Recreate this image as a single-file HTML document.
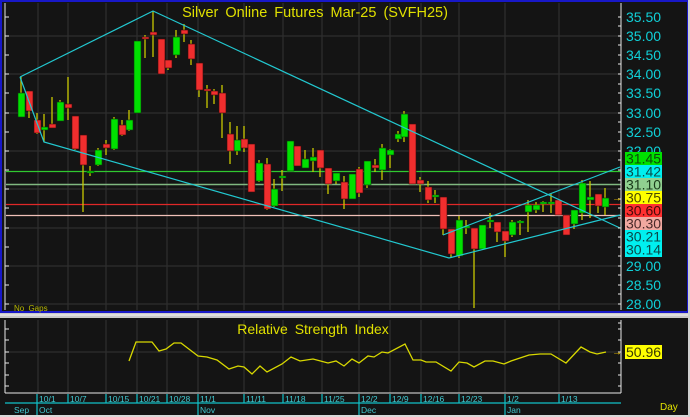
<!DOCTYPE html>
<html><head><meta charset="utf-8"><style>
html,body{margin:0;padding:0;background:#f0f0f0;}
svg{display:block;font-family:"Liberation Sans",sans-serif;}
</style></head><body>
<svg width="690" height="417" viewBox="0 0 690 417" xmlns="http://www.w3.org/2000/svg">
<rect x="0" y="0" width="690" height="417" fill="#141414"/>
<!-- main panel border -->
<rect x="1" y="1" width="687" height="311" fill="none" stroke="#1818c8" stroke-width="2"/>
<!-- separator -->
<rect x="0" y="313" width="690" height="5" fill="#c8c8c8"/>
<line x1="0" y1="315" x2="690" y2="315" stroke="#f4f4f4" stroke-width="1"/>
<rect x="0" y="415" width="690" height="2" fill="#d8d8d8"/>
<rect x="688" y="0" width="2" height="417" fill="#d0d0d0"/>
<!-- grid horizontal -->
<g stroke="#2e2e2e" stroke-width="1.3">
<line x1="6" y1="36" x2="621" y2="36"/><line x1="6" y1="74" x2="621" y2="74"/><line x1="6" y1="113" x2="621" y2="113"/><line x1="6" y1="151" x2="621" y2="151"/><line x1="6" y1="189" x2="621" y2="189"/><line x1="6" y1="228" x2="621" y2="228"/><line x1="6" y1="266" x2="621" y2="266"/><line x1="6" y1="304" x2="621" y2="304"/>
<line x1="6" y1="352" x2="621" y2="352"/>
</g>
<g stroke="#2e2e2e" stroke-width="1.3">
<line x1="38" y1="3" x2="38" y2="310"/><line x1="68" y1="3" x2="68" y2="310"/><line x1="106" y1="3" x2="106" y2="310"/><line x1="137" y1="3" x2="137" y2="310"/><line x1="167" y1="3" x2="167" y2="310"/><line x1="198" y1="3" x2="198" y2="310"/><line x1="244" y1="3" x2="244" y2="310"/><line x1="283" y1="3" x2="283" y2="310"/><line x1="322" y1="3" x2="322" y2="310"/><line x1="359" y1="3" x2="359" y2="310"/><line x1="390" y1="3" x2="390" y2="310"/><line x1="421" y1="3" x2="421" y2="310"/><line x1="459" y1="3" x2="459" y2="310"/><line x1="505" y1="3" x2="505" y2="310"/><line x1="559" y1="3" x2="559" y2="310"/>
<line x1="38" y1="320" x2="38" y2="393"/><line x1="68" y1="320" x2="68" y2="393"/><line x1="106" y1="320" x2="106" y2="393"/><line x1="137" y1="320" x2="137" y2="393"/><line x1="167" y1="320" x2="167" y2="393"/><line x1="198" y1="320" x2="198" y2="393"/><line x1="244" y1="320" x2="244" y2="393"/><line x1="283" y1="320" x2="283" y2="393"/><line x1="322" y1="320" x2="322" y2="393"/><line x1="359" y1="320" x2="359" y2="393"/><line x1="390" y1="320" x2="390" y2="393"/><line x1="421" y1="320" x2="421" y2="393"/><line x1="459" y1="320" x2="459" y2="393"/><line x1="505" y1="320" x2="505" y2="393"/><line x1="559" y1="320" x2="559" y2="393"/>
</g>
<!-- horizontal price lines -->
<line x1="6" y1="171.5" x2="621" y2="171.5" stroke="#30c830" stroke-width="1.3"/>
<line x1="6" y1="184.5" x2="621" y2="184.5" stroke="#80b880" stroke-width="1.6"/>
<line x1="6" y1="204.5" x2="621" y2="204.5" stroke="#e02828" stroke-width="1.3"/>
<line x1="6" y1="215.5" x2="621" y2="215.5" stroke="#f0c0b8" stroke-width="1.3"/>
<!-- candles -->
<g stroke="#c8c800" stroke-width="1.3" id="w">
<line x1="21" y1="77" x2="21" y2="117"/><line x1="29" y1="91" x2="29" y2="118"/><line x1="37" y1="113" x2="37" y2="134"/><line x1="44" y1="114" x2="44" y2="142"/><line x1="52" y1="97" x2="52" y2="128"/><line x1="60" y1="100" x2="60" y2="121"/><line x1="68" y1="77" x2="68" y2="120"/><line x1="75" y1="116" x2="75" y2="150"/><line x1="83" y1="135" x2="83" y2="212"/><line x1="90" y1="166" x2="90" y2="176"/><line x1="98" y1="148" x2="98" y2="166"/><line x1="106" y1="140" x2="106" y2="155"/><line x1="114" y1="117" x2="114" y2="150"/><line x1="122" y1="120" x2="122" y2="136"/><line x1="129" y1="110" x2="129" y2="131"/><line x1="137" y1="41" x2="137" y2="113"/><line x1="145" y1="35" x2="145" y2="58"/><line x1="153" y1="11" x2="153" y2="57"/><line x1="161" y1="39" x2="161" y2="74"/><line x1="168" y1="60" x2="168" y2="70"/><line x1="176" y1="30" x2="176" y2="58"/><line x1="184" y1="24" x2="184" y2="42"/><line x1="191" y1="40" x2="191" y2="65"/><line x1="199" y1="63" x2="199" y2="97"/><line x1="207" y1="85" x2="207" y2="108"/><line x1="214" y1="89" x2="214" y2="104"/><line x1="222" y1="85" x2="222" y2="138"/><line x1="230" y1="122" x2="230" y2="164"/><line x1="237" y1="126" x2="237" y2="155"/><line x1="244" y1="126" x2="244" y2="152"/><line x1="251" y1="144" x2="251" y2="192"/><line x1="259" y1="160" x2="259" y2="182"/><line x1="267" y1="158" x2="267" y2="210"/><line x1="274" y1="179" x2="274" y2="207"/><line x1="282" y1="170" x2="282" y2="191"/><line x1="290" y1="141" x2="290" y2="171"/><line x1="297" y1="146" x2="297" y2="166"/><line x1="305" y1="150" x2="305" y2="168"/><line x1="313" y1="148" x2="313" y2="172"/><line x1="320" y1="150" x2="320" y2="177"/><line x1="328" y1="168" x2="328" y2="194"/><line x1="336" y1="173" x2="336" y2="184"/><line x1="344" y1="176" x2="344" y2="209"/><line x1="352" y1="174" x2="352" y2="199"/><line x1="359" y1="167" x2="359" y2="197"/><line x1="367" y1="161" x2="367" y2="188"/><line x1="375" y1="159" x2="375" y2="172"/><line x1="382" y1="144" x2="382" y2="180"/><line x1="390" y1="149" x2="390" y2="168"/><line x1="398" y1="131" x2="398" y2="142"/><line x1="404" y1="111" x2="404" y2="142"/><line x1="412" y1="124" x2="412" y2="184"/><line x1="420" y1="177" x2="420" y2="192"/><line x1="428" y1="181" x2="428" y2="203"/><line x1="435" y1="190" x2="435" y2="203"/><line x1="443" y1="197" x2="443" y2="235"/><line x1="451" y1="229" x2="451" y2="257"/><line x1="459" y1="216" x2="459" y2="258"/><line x1="466" y1="220" x2="466" y2="234"/><line x1="474" y1="228" x2="474" y2="308"/><line x1="482" y1="225" x2="482" y2="249"/><line x1="490" y1="213" x2="490" y2="228"/><line x1="497" y1="222" x2="497" y2="242"/><line x1="505" y1="231" x2="505" y2="257"/><line x1="512" y1="220" x2="512" y2="237"/><line x1="520" y1="220" x2="520" y2="235"/><line x1="528" y1="200" x2="528" y2="232"/><line x1="536" y1="202" x2="536" y2="213"/><line x1="543" y1="201" x2="543" y2="212"/><line x1="551" y1="194" x2="551" y2="213"/><line x1="558" y1="200" x2="558" y2="215"/><line x1="566" y1="215" x2="566" y2="235"/><line x1="574" y1="210" x2="574" y2="229"/><line x1="582" y1="180" x2="582" y2="220"/><line x1="590" y1="181" x2="590" y2="218"/><line x1="598" y1="194" x2="598" y2="213"/><line x1="605" y1="188" x2="605" y2="215"/>
</g>
<g fill="#00e000" stroke="#0a3a0a" stroke-width="0.6">
<rect x="18" y="93" width="7" height="24"/><rect x="41" y="127" width="7" height="3"/><rect x="57" y="102" width="7" height="19"/><rect x="87" y="171" width="7" height="2"/><rect x="95" y="150" width="7" height="15"/><rect x="111" y="119" width="7" height="30"/><rect x="126" y="120" width="7" height="10"/><rect x="134" y="41" width="7" height="72"/><rect x="173" y="37" width="7" height="18"/><rect x="234" y="140" width="7" height="11"/><rect x="256" y="163" width="7" height="18"/><rect x="271" y="189" width="7" height="17"/><rect x="279" y="176" width="7" height="2"/><rect x="287" y="141" width="7" height="30"/><rect x="302" y="159" width="7" height="9"/><rect x="310" y="157" width="7" height="4"/><rect x="333" y="173" width="7" height="8"/><rect x="349" y="174" width="7" height="25"/><rect x="364" y="161" width="7" height="24"/><rect x="379" y="148" width="7" height="22"/><rect x="387" y="150" width="7" height="5"/><rect x="395" y="134" width="7" height="5"/><rect x="401" y="114" width="7" height="23"/><rect x="432" y="195" width="7" height="2"/><rect x="456" y="220" width="7" height="36"/><rect x="463" y="226" width="7" height="2"/><rect x="479" y="225" width="7" height="24"/><rect x="487" y="220" width="7" height="2"/><rect x="509" y="222" width="7" height="13"/><rect x="517" y="221" width="7" height="2"/><rect x="525" y="205" width="7" height="7"/><rect x="533" y="205" width="7" height="5"/><rect x="540" y="202" width="7" height="2"/><rect x="548" y="202" width="7" height="2"/><rect x="571" y="210" width="7" height="14"/><rect x="579" y="183" width="7" height="30"/><rect x="587" y="197" width="7" height="3"/><rect x="602" y="198" width="7" height="9"/>
</g>
<g fill="#f02e2e" stroke="#3a0a0a" stroke-width="0.6">
<rect x="26" y="91" width="7" height="20"/><rect x="34" y="120" width="7" height="13"/><rect x="49" y="124" width="7" height="4"/><rect x="65" y="104" width="7" height="4"/><rect x="72" y="116" width="7" height="33"/><rect x="80" y="135" width="7" height="30"/><rect x="103" y="144" width="7" height="4"/><rect x="119" y="125" width="7" height="10"/><rect x="142" y="37" width="7" height="2"/><rect x="150" y="32" width="7" height="3"/><rect x="158" y="39" width="7" height="35"/><rect x="165" y="60" width="7" height="8"/><rect x="181" y="30" width="7" height="4"/><rect x="188" y="44" width="7" height="15"/><rect x="196" y="63" width="7" height="27"/><rect x="204" y="89" width="7" height="2"/><rect x="211" y="91" width="7" height="4"/><rect x="219" y="93" width="7" height="20"/><rect x="227" y="134" width="7" height="17"/><rect x="241" y="139" width="7" height="9"/><rect x="248" y="144" width="7" height="48"/><rect x="264" y="164" width="7" height="45"/><rect x="294" y="146" width="7" height="20"/><rect x="317" y="150" width="7" height="18"/><rect x="325" y="168" width="7" height="16"/><rect x="341" y="182" width="7" height="17"/><rect x="356" y="169" width="7" height="24"/><rect x="372" y="165" width="7" height="3"/><rect x="409" y="124" width="7" height="60"/><rect x="417" y="180" width="7" height="4"/><rect x="425" y="187" width="7" height="13"/><rect x="440" y="197" width="7" height="32"/><rect x="448" y="229" width="7" height="25"/><rect x="471" y="228" width="7" height="21"/><rect x="494" y="222" width="7" height="10"/><rect x="502" y="231" width="7" height="10"/><rect x="555" y="200" width="7" height="15"/><rect x="563" y="215" width="7" height="20"/><rect x="595" y="194" width="7" height="12"/>
</g>
<!-- trend lines -->
<g stroke="#22c8d0" stroke-width="1.2" fill="none">
<polyline points="20,77 153,11 620,228"/>
<polyline points="20,77 44,142 449,258 620,215"/>
<line x1="443" y1="235" x2="620" y2="167"/>
</g>
<!-- left axis ticks main -->
<line x1="5" y1="3" x2="5" y2="310" stroke="#e8e8e8" stroke-width="1"/>
<g stroke="#e8e8e8" stroke-width="1">
<line x1="5" y1="17" x2="9" y2="17"/><line x1="5" y1="36" x2="9" y2="36"/><line x1="5" y1="55" x2="9" y2="55"/><line x1="5" y1="74" x2="9" y2="74"/><line x1="5" y1="93" x2="9" y2="93"/><line x1="5" y1="113" x2="9" y2="113"/><line x1="5" y1="132" x2="9" y2="132"/><line x1="5" y1="151" x2="9" y2="151"/><line x1="5" y1="170" x2="9" y2="170"/><line x1="5" y1="189" x2="9" y2="189"/><line x1="5" y1="208" x2="9" y2="208"/><line x1="5" y1="228" x2="9" y2="228"/><line x1="5" y1="247" x2="9" y2="247"/><line x1="5" y1="266" x2="9" y2="266"/><line x1="5" y1="285" x2="9" y2="285"/><line x1="5" y1="304" x2="9" y2="304"/>
</g>
<!-- right axis main -->
<line x1="621" y1="3" x2="621" y2="310" stroke="#e8e8e8" stroke-width="1"/>
<g stroke="#e8e8e8" stroke-width="1">
<line x1="618" y1="17" x2="621" y2="17"/><line x1="618" y1="26" x2="621" y2="26"/><line x1="618" y1="36" x2="621" y2="36"/><line x1="618" y1="45" x2="621" y2="45"/><line x1="618" y1="55" x2="621" y2="55"/><line x1="618" y1="64" x2="621" y2="64"/><line x1="618" y1="74" x2="621" y2="74"/><line x1="618" y1="84" x2="621" y2="84"/><line x1="618" y1="93" x2="621" y2="93"/><line x1="618" y1="103" x2="621" y2="103"/><line x1="618" y1="113" x2="621" y2="113"/><line x1="618" y1="122" x2="621" y2="122"/><line x1="618" y1="132" x2="621" y2="132"/><line x1="618" y1="141" x2="621" y2="141"/><line x1="618" y1="151" x2="621" y2="151"/><line x1="618" y1="160" x2="621" y2="160"/><line x1="618" y1="170" x2="621" y2="170"/><line x1="618" y1="180" x2="621" y2="180"/><line x1="618" y1="189" x2="621" y2="189"/><line x1="618" y1="199" x2="621" y2="199"/><line x1="618" y1="208" x2="621" y2="208"/><line x1="618" y1="218" x2="621" y2="218"/><line x1="618" y1="228" x2="621" y2="228"/><line x1="618" y1="237" x2="621" y2="237"/><line x1="618" y1="247" x2="621" y2="247"/><line x1="618" y1="256" x2="621" y2="256"/><line x1="618" y1="266" x2="621" y2="266"/><line x1="618" y1="275" x2="621" y2="275"/><line x1="618" y1="285" x2="621" y2="285"/><line x1="618" y1="294" x2="621" y2="294"/><line x1="618" y1="304" x2="621" y2="304"/>
</g>
<g fill="#10d0d8" font-size="14">
<text x="626" y="22">35.50</text><text x="626" y="41">35.00</text><text x="626" y="60">34.50</text><text x="626" y="79">34.00</text><text x="626" y="98">33.50</text><text x="626" y="118">33.00</text><text x="626" y="137">32.50</text><text x="626" y="156">32.00</text><text x="626" y="271">29.00</text><text x="626" y="290">28.50</text><text x="626" y="309">28.00</text>
</g>
<g font-size="14">
<rect x="625" y="152" width="37" height="13" fill="#00e000"/><text x="626" y="163.5" fill="#0a4a0a">31.45</text>
<rect x="625" y="165" width="37" height="13" fill="#00f0f0"/><text x="626" y="176.5" fill="#0a4a4a">31.42</text>
<rect x="625" y="178" width="37" height="13" fill="#90d090"/><text x="626" y="189.5" fill="#1a3a1a">31.10</text>
<rect x="625" y="191" width="37" height="13" fill="#ffff00"/><text x="626" y="202.5" fill="#4a4a00">30.75</text>
<rect x="625" y="204" width="37" height="13" fill="#ff3030"/><text x="626" y="215.5" fill="#4a0a0a">30.60</text>
<rect x="625" y="217" width="37" height="13" fill="#f0a8a0"/><text x="626" y="228.5" fill="#4a2a2a">30.30</text>
<rect x="625" y="230" width="37" height="27" fill="#00f0f0"/><text x="626" y="241.5" fill="#0a4a4a">30.21</text><text x="626" y="254.5" fill="#0a4a4a">30.14</text>
</g>
<text x="612" y="201" fill="#ffd000" font-size="10">→</text>
<!-- title -->
<text x="315" y="17" fill="#e0e000" font-size="14.5" text-anchor="middle" word-spacing="3">Silver Online Futures Mar-25 (SVFH25)</text>
<text x="14" y="311" fill="#b8b800" font-size="8" word-spacing="2">No Gaps</text>
<!-- RSI panel -->
<line x1="5" y1="320" x2="5" y2="393" stroke="#e8e8e8" stroke-width="1"/>
<line x1="5" y1="393" x2="621" y2="393" stroke="#e8e8e8" stroke-width="1"/>
<line x1="621" y1="320" x2="621" y2="393" stroke="#e8e8e8" stroke-width="1"/>
<g stroke="#e8e8e8" stroke-width="1">
<line x1="5" y1="329" x2="9" y2="329"/><line x1="5" y1="340" x2="9" y2="340"/><line x1="5" y1="352" x2="9" y2="352"/><line x1="5" y1="363" x2="9" y2="363"/><line x1="5" y1="375" x2="9" y2="375"/><line x1="5" y1="386" x2="9" y2="386"/>
<line x1="618" y1="323" x2="621" y2="323"/><line x1="618" y1="329" x2="621" y2="329"/><line x1="618" y1="340" x2="621" y2="340"/><line x1="618" y1="352" x2="621" y2="352"/><line x1="618" y1="363" x2="621" y2="363"/><line x1="618" y1="375" x2="621" y2="375"/><line x1="618" y1="386" x2="621" y2="386"/>
</g>
<text x="313" y="334" fill="#e0e000" font-size="14" text-anchor="middle" word-spacing="3">Relative Strength Index</text>
<polyline fill="none" stroke="#d8d800" stroke-width="1.3" points="129,361 136,342 152,342 159,351 166,349 174,343 181,343 198,356 207,357 217,360 229,369 238,366 244,367 252,374 260,366 267,372 282,364 291,357 300,361 313,359 328,363 336,361 344,366 352,359 359,363 368,356 374,357 382,352 388,353 405,344 413,360 421,360 426,362 436,362 451,371 459,362 467,363 474,367 485,361 493,361 504,364 511,361 520,358 529,355 540,354 551,354 566,363 581,347 590,352 597,354 606,352"/>
<text x="612" y="355" fill="#ffd000" font-size="10">→</text>
<rect x="625" y="345" width="37" height="14" fill="#ffff00"/><text x="626" y="357" fill="#3a3a00" font-size="14">50.96</text>
<!-- time axis -->
<line x1="5" y1="403" x2="621" y2="403" stroke="#10c0c8" stroke-width="1.2"/>
<g stroke="#10c0c8" stroke-width="1.2">
<line x1="37" y1="394" x2="37" y2="415"/><line x1="68" y1="394" x2="68" y2="403"/><line x1="106" y1="394" x2="106" y2="403"/><line x1="137" y1="394" x2="137" y2="403"/><line x1="167" y1="394" x2="167" y2="403"/><line x1="198" y1="394" x2="198" y2="415"/><line x1="244" y1="394" x2="244" y2="403"/><line x1="283" y1="394" x2="283" y2="403"/><line x1="322" y1="394" x2="322" y2="403"/><line x1="359" y1="394" x2="359" y2="415"/><line x1="390" y1="394" x2="390" y2="403"/><line x1="421" y1="394" x2="421" y2="403"/><line x1="459" y1="394" x2="459" y2="403"/><line x1="505" y1="394" x2="505" y2="415"/><line x1="559" y1="394" x2="559" y2="403"/>
</g>
<g fill="#40c8d0" font-size="8.5">
<text x="39" y="402">10/1</text><text x="70" y="402">10/7</text><text x="108" y="402">10/15</text><text x="139" y="402">10/21</text><text x="169" y="402">10/28</text><text x="200" y="402">11/1</text><text x="246" y="402">11/11</text><text x="285" y="402">11/18</text><text x="324" y="402">11/25</text><text x="361" y="402">12/2</text><text x="392" y="402">12/9</text><text x="423" y="402">12/16</text><text x="461" y="402">12/23</text><text x="507" y="402">1/2</text><text x="561" y="402">1/13</text>
<text x="14" y="413">Sep</text><text x="39" y="413">Oct</text><text x="200" y="413">Nov</text><text x="361" y="413">Dec</text><text x="507" y="413">Jan</text>
</g>
<text x="660" y="410" fill="#e0e000" font-size="10">Day</text>
</svg>
</body></html>
